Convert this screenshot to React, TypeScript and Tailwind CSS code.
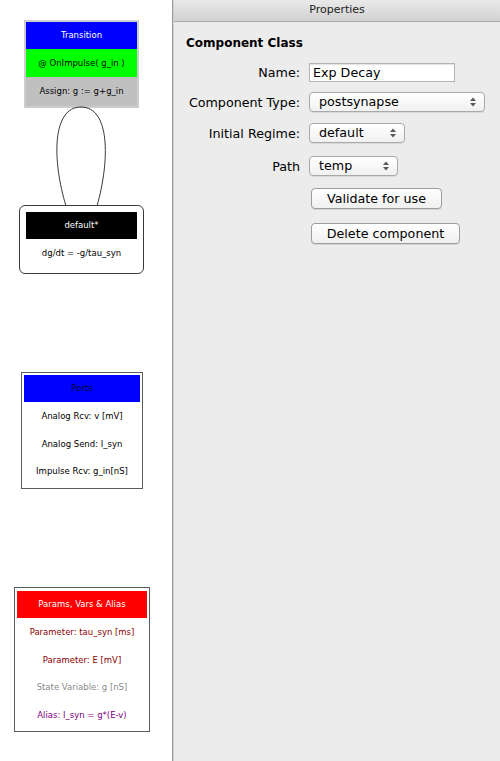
import React from "react";

const ui = { fontFamily: '"DejaVu Sans", "Liberation Sans", sans-serif' };

function UpDown() {
  return (
    <svg width="6" height="10" viewBox="0 0 6 10" className="shrink-0">
      <polygon points="0,4 3,0.5 6,4" fill="#5a5a5a" />
      <polygon points="0,6 3,9.5 6,6" fill="#5a5a5a" />
    </svg>
  );
}

function Select({ value, width }: { value: string; width: string }) {
  return (
    <div
      className={`${width} h-[20px] flex items-center justify-between pl-[9px] pr-[8px] rounded-[4px] border border-[#a9a9a9] bg-gradient-to-b from-white to-[#f1f1f1] shadow-[0_1px_0_rgba(0,0,0,0.08)]`}
    >
      <span className="leading-none">{value}</span>
      <UpDown />
    </div>
  );
}

function Button({ label, width }: { label: string; width: string }) {
  return (
    <div
      className={`${width} h-[21px] flex items-center justify-center rounded-[4px] border border-[#9d9d9d] bg-gradient-to-b from-white to-[#f0f0f0] shadow-[0_1px_0_rgba(0,0,0,0.1)]`}
    >
      {label}
    </div>
  );
}

function Row({ label, children, className }: { label: string; children: React.ReactNode; className?: string }) {
  return (
    <div className={`flex items-center ${className ?? ""}`}>
      <div className="w-[114px] text-right">{label}</div>
      <div className="ml-[9px]">{children}</div>
    </div>
  );
}

export default function App() {
  return (
    <div className="w-[500px] h-[761px] flex overflow-hidden bg-white" style={ui}>
      {/* diagram canvas */}
      <div className="relative w-[173px] h-full bg-white border-r border-[#9c9c9c] text-[8.5px] leading-none">
        {/* transition node */}
        <div className="absolute left-[24px] top-[20px] w-[115px] border-2 border-[#cdcdcd] bg-[#c0c0c0] flex flex-col">
          <div className="h-[27px] bg-[#0000ff] text-white flex items-center justify-center">Transition</div>
          <div className="h-[28px] bg-[#00ff00] text-black flex items-center justify-center">@ OnImpulse( g_in )</div>
          <div className="h-[29px] bg-[#c0c0c0] text-black flex items-center justify-center">Assign: g := g+g_in</div>
        </div>

        {/* self loop */}
        <svg className="absolute left-0 top-0" width="172" height="220">
          <path d="M 66 206 C 52 160, 52 107, 81 107 C 110 107, 110 160, 97 206" fill="none" stroke="#222" strokeWidth="0.9" />
        </svg>

        {/* regime node */}
        <div className="absolute left-[19px] top-[205px] w-[125px] h-[69px] rounded-[6px] border border-[#3a3a3a] bg-white px-[6px] pt-[6px]">
          <div className="h-[27px] bg-black text-white flex items-center justify-center">default*</div>
          <div className="h-[29px] flex items-center justify-center text-black">dg/dt = -g/tau_syn</div>
        </div>

        {/* ports */}
        <div className="absolute left-[21px] top-[372px] w-[122px] h-[117px] border border-[#5c5c5c] bg-white p-[2px] text-black">
          <div className="h-[27px] bg-[#0000ff] flex items-center justify-center text-[#000033]">Ports</div>
          <div className="h-[28px] flex items-center justify-center">Analog Rcv: v [mV]</div>
          <div className="h-[28px] flex items-center justify-center">Analog Send: I_syn</div>
          <div className="h-[27px] flex items-center justify-center">Impulse Rcv: g_in[nS]</div>
        </div>

        {/* params */}
        <div className="absolute left-[14px] top-[587px] w-[136px] h-[145px] border border-[#5c5c5c] bg-white px-[2px] pt-[3px]">
          <div className="h-[27px] bg-[#ff0000] text-white flex items-center justify-center">Params, Vars &amp; Alias</div>
          <div className="h-[28px] flex items-center justify-center text-[#8b0000]">Parameter: tau_syn [ms]</div>
          <div className="h-[28px] flex items-center justify-center text-[#8b0000]">Parameter: E [mV]</div>
          <div className="h-[27px] flex items-center justify-center text-[#8a8a8a]">State Variable: g [nS]</div>
          <div className="h-[28px] flex items-center justify-center text-[#800080]">Alias: I_syn = g*(E-v)</div>
        </div>
      </div>

      {/* properties panel */}
      <div className="flex-1 h-full bg-[#ececec] border-l border-[#cfcfcf] flex flex-col text-[12.7px] text-black">
        <div className="h-[22px] shrink-0 bg-gradient-to-b from-[#e9e9e9] to-[#d2d2d2] border-b border-[#a8a8a8] flex items-center justify-center text-[11px] text-[#222]">
          Properties
        </div>
        <div className="pl-[12px] pt-[14px] flex flex-col">
          <div className="text-[12px] font-bold leading-[15px]">Component Class</div>
          <Row label="Name:" className="mt-[12px]">
            <div className="w-[146px] h-[19px] border border-[#b3b3b3] bg-white shadow-[inset_0_1px_1px_rgba(0,0,0,0.12)] flex items-center pl-[3px]">
              Exp Decay
            </div>
          </Row>
          <Row label="Component Type:" className="mt-[10px]">
            <Select value="postsynapse" width="w-[176px]" />
          </Row>
          <Row label="Initial Regime:" className="mt-[11px]">
            <Select value="default" width="w-[96px]" />
          </Row>
          <Row label="Path" className="mt-[13px]">
            <Select value="temp" width="w-[89px]" />
          </Row>
          <Row label="" className="mt-[12px]">
            <div className="ml-[2px]">
              <Button label="Validate for use" width="w-[131px]" />
            </div>
          </Row>
          <Row label="" className="mt-[14px]">
            <div className="ml-[2px]">
              <Button label="Delete component" width="w-[149px]" />
            </div>
          </Row>
        </div>
      </div>
    </div>
  );
}
